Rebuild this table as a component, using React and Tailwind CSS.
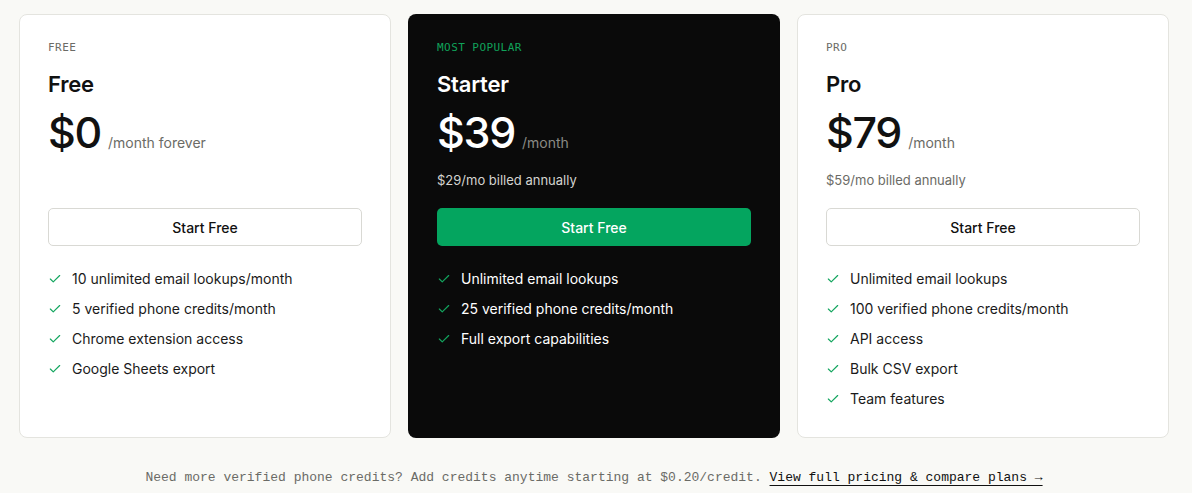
import { Check } from 'lucide-react'

const plans = [
  {
    label: 'FREE',
    name: 'Free',
    price: '$0',
    period: '/month forever',
    note: '',
    features: [
      '10 unlimited email lookups/month',
      '5 verified phone credits/month',
      'Chrome extension access',
      'Google Sheets export',
    ],
  },
  {
    label: 'MOST POPULAR',
    name: 'Starter',
    price: '$39',
    period: '/month',
    note: '$29/mo billed annually',
    dark: true,
    features: ['Unlimited email lookups', '25 verified phone credits/month', 'Full export capabilities'],
  },
  {
    label: 'PRO',
    name: 'Pro',
    price: '$79',
    period: '/month',
    note: '$59/mo billed annually',
    features: [
      'Unlimited email lookups',
      '100 verified phone credits/month',
      'API access',
      'Bulk CSV export',
      'Team features',
    ],
  },
]

function PlanCard({ plan }) {
  const dark = plan.dark
  return (
    <div
      className={
        dark
          ? 'rounded-lg bg-[#0a0a0a] px-[29px] pt-[27px] pb-6 text-white'
          : 'rounded-lg border border-[#e4e4df] bg-white px-[28px] pt-[26px] pb-6 text-[#111]'
      }
    >
      <div
        className={
          'font-["DejaVu_Sans_Mono",monospace] text-[11px] leading-[14px] tracking-[0.04em] ' +
          (dark ? 'text-[#10a35a]' : 'text-[#6b6b66]')
        }
      >
        {plan.label}
      </div>
      <h3 className="mt-[15px] text-[22px] font-semibold leading-[28px] tracking-[-0.01em]">{plan.name}</h3>
      <div className="mt-[8px] flex items-baseline gap-[7px]">
        <span className="text-[43px] font-medium leading-[52px] tracking-[-0.03em]">{plan.price}</span>
        <span className={'text-[14px] ' + (dark ? 'text-[#8a8a85]' : 'text-[#6b6b66]')}>{plan.period}</span>
      </div>
      <div className={'mt-[13px] h-[18px] text-[13px] leading-[18px] ' + (dark ? 'text-[#d4d4d0]' : 'text-[#6b6b66]')}>
        {plan.note}
      </div>
      <button
        className={
          'mt-[19px] flex h-[38px] w-full items-center justify-center rounded-[5px] text-[14px] font-medium ' +
          (dark ? 'bg-[#04a55f] text-white' : 'border border-[#d9d9d4] bg-white text-[#111]')
        }
      >
        Start Free
      </button>
      <ul className="mt-[23px] flex flex-col gap-[10px]">
        {plan.features.map((f) => (
          <li key={f} className="flex h-[20px] items-center gap-[10px] text-[14px] leading-[20px]">
            <Check size={14} strokeWidth={2} className="text-[#12a55e]" />
            <span className={dark ? 'text-white' : 'text-[#1a1a1a]'}>{f}</span>
          </li>
        ))}
      </ul>
    </div>
  )
}

export default function App() {
  return (
    <div className="min-h-[493px] bg-[#f9f9f6] pt-[14px] pl-[19px] pr-[23px] font-['Inter',sans-serif]">
      <div className="grid h-[424px] grid-cols-3 gap-[17px]">
        {plans.map((p) => (
          <PlanCard key={p.name} plan={p} />
        ))}
      </div>
      <p className="mt-[31px] text-center font-['Liberation_Mono',monospace] text-[13px] leading-[18px] text-[#6b6b66]">
        Need more verified phone credits? Add credits anytime starting at $0.20/credit.{' '}
        <a href="#" className="text-[#111] underline decoration-1 underline-offset-[4px]">
          View full pricing &amp; compare plans →
        </a>
      </p>
    </div>
  )
}
